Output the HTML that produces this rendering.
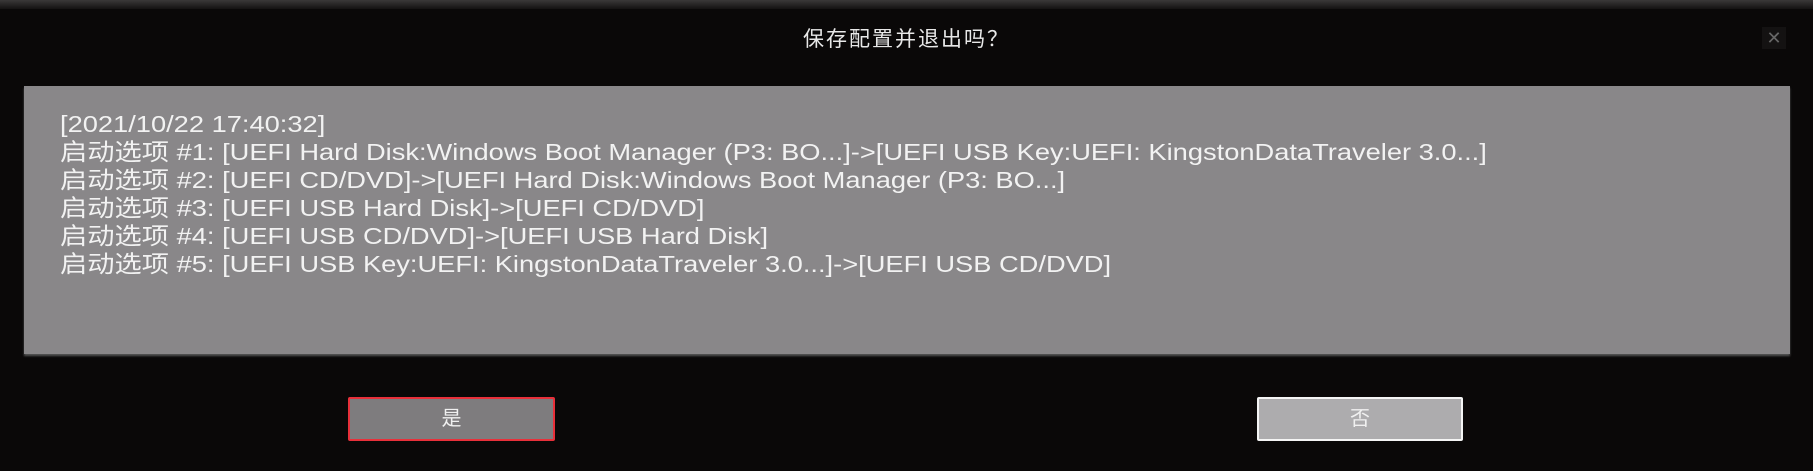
<!DOCTYPE html>
<html><head><meta charset="utf-8"><style>
html,body{margin:0;padding:0;}
body{width:1813px;height:471px;background:#0a0808;position:relative;overflow:hidden;font-family:"Liberation Sans","Noto Sans CJK SC",sans-serif;}
.top{position:absolute;left:0;top:0;width:1813px;height:9px;background:linear-gradient(#3a3838,#141212);}
.title{position:absolute;left:0;width:1813px;top:23px;text-align:center;color:#e8e8e8;font-size:21px;letter-spacing:2px;}
.close{position:absolute;left:1762px;top:27px;width:24px;height:22px;background:#141212;color:#666;font-size:18px;line-height:22px;text-align:center;}
.panel{position:absolute;left:24px;top:86px;width:1766px;height:268px;background:#898789;box-shadow:0 2px 2px #555;}
.txt{position:absolute;left:60px;top:110px;color:#f2f2f2;font-size:23.5px;line-height:28px;white-space:pre;transform:scaleX(1.16);transform-origin:0 0;}
.btn{position:absolute;top:397px;height:44px;box-sizing:border-box;text-align:center;color:#f0f0f0;font-size:20px;line-height:40px;}
.yes{left:348px;width:207px;border:2px solid #e8303a;background:#7e7c7e;border-radius:2px;}
.no{left:1257px;width:206px;border:2px solid #f4f4f4;background:#adacae;border-radius:2px;}
</style></head><body>
<div class="top"></div>
<div class="title">保存配置并退出吗？</div>
<div class="close">✕</div>
<div class="panel"></div>
<div class="txt">[2021/10/22 17:40:32]
启动选项 #1: [UEFI Hard Disk:Windows Boot Manager (P3: BO...]->[UEFI USB Key:UEFI: KingstonDataTraveler 3.0...]
启动选项 #2: [UEFI CD/DVD]->[UEFI Hard Disk:Windows Boot Manager (P3: BO...]
启动选项 #3: [UEFI USB Hard Disk]->[UEFI CD/DVD]
启动选项 #4: [UEFI USB CD/DVD]->[UEFI USB Hard Disk]
启动选项 #5: [UEFI USB Key:UEFI: KingstonDataTraveler 3.0...]->[UEFI USB CD/DVD]</div>
<div class="btn yes">是</div>
<div class="btn no">否</div>
</body></html>
